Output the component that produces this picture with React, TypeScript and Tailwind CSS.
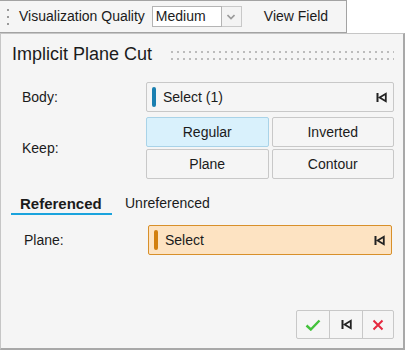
import React from "react";

const font = { fontFamily: '"Liberation Sans", Arial, sans-serif' };

function ClearIcon({ color = "#222" }: { color?: string }) {
  return (
    <svg width="11" height="11" viewBox="0 0 11 11">
      <rect x="0.5" y="1" width="2" height="9" fill={color} />
      <polygon points="3.6,5.5 9.8,1.8 9.8,9.2" fill="none" stroke={color} strokeWidth="1.8" strokeLinejoin="miter" />
    </svg>
  );
}

function Dots() {
  return (
    <svg className="w-full h-[10px] block" height="10">
      <defs>
        <pattern id="dp" x="0" y="0" width="6" height="7" patternUnits="userSpaceOnUse">
          <rect x="0" y="0" width="2" height="2" fill="#bcbcbc" />
        </pattern>
      </defs>
      <rect x="0" y="0" width="100%" height="9" fill="url(#dp)" />
    </svg>
  );
}

export default function App() {
  return (
    <div className="w-[407px] h-[351px] bg-white text-[14px] text-[#1b1b1b] relative overflow-hidden" style={font}>
      {/* toolbar */}
      <div className="w-[347px] h-[33px] border border-l-0 border-[#a3a3a3] bg-[#f5f5f5] flex items-center">
        <div className="flex flex-col gap-[5px] ml-[7px] w-[2px]">
          <div className="w-[2px] h-[2px] bg-[#9a9a9a]" />
          <div className="w-[2px] h-[2px] bg-[#9a9a9a]" />
          <div className="w-[2px] h-[2px] bg-[#9a9a9a]" />
        </div>
        <span className="ml-[10px] whitespace-nowrap">Visualization Quality</span>
        <div className="ml-[7px] flex h-[21px]">
          <div className="w-[70px] h-full bg-white border border-[#b4b4b4] flex items-center pl-[3px]">Medium</div>
          <div className="w-[20px] h-full bg-[#f3f3f3] border border-l-0 border-[#c8c8c8] flex items-center justify-center">
            <svg width="8" height="6" viewBox="0 0 8 6">
              <path d="M0.5 1 L4 4.5 L7.5 1" fill="none" stroke="#9a9a9a" strokeWidth="1.6" />
            </svg>
          </div>
        </div>
        <span className="ml-[22px] whitespace-nowrap">View Field</span>
      </div>

      {/* panel */}
      <div className="w-[405px] h-[317px] border border-[#c6c6c6] border-r-2 border-r-[#a8a8a8] border-b-2 border-b-[#a8a8a8] bg-[#f5f5f5] flex flex-col">
        <div className="h-[40px] flex items-center pl-[11px] pr-[9px]">
          <span className="text-[18px] leading-none whitespace-nowrap shrink-0">Implicit Plane Cut</span>
          <div className="flex-1 min-w-0 ml-[19px] pt-[4px]">
            <Dots />
          </div>
        </div>

        {/* Body row */}
        <div className="mt-[8px] flex items-center pl-[21px] pr-[9px]">
          <span className="w-[124px]">Body:</span>
          <div className="flex-1 h-[30px] bg-[#f5f5f5] border border-[#c8c8c8] rounded-[2px] flex items-center pl-[5px] pr-[6px]">
            <div className="w-[4px] h-[20px] rounded-[2px] bg-[#1a7fb0]" />
            <span className="ml-[7px] flex-1">Select (1)</span>
            <ClearIcon />
          </div>
        </div>

        {/* Keep */}
        <div className="mt-[5px] flex items-center pl-[21px] pr-[9px]">
          <span className="w-[124px]">Keep:</span>
          <div className="flex-1 grid grid-cols-2 gap-x-[3px] gap-y-[2px]">
            <div className="h-[30px] flex items-center justify-center bg-[#d9f1fc] border border-[#a9d3e8] rounded-[2px]">Regular</div>
            <div className="h-[30px] flex items-center justify-center border border-[#c8c8c8] rounded-[2px]">Inverted</div>
            <div className="h-[30px] flex items-center justify-center border border-[#c8c8c8] rounded-[2px]">Plane</div>
            <div className="h-[30px] flex items-center justify-center border border-[#c8c8c8] rounded-[2px]">Contour</div>
          </div>
        </div>

        {/* Tabs */}
        <div className="mt-[14px] flex pl-[10px]">
          <div className="h-[22px] px-[9px] flex items-start text-[15px] font-bold border-b-2 border-[#1aa3dd] w-[101px] whitespace-nowrap">Referenced</div>
          <div className="h-[22px] ml-[4px] px-[9px] flex items-start whitespace-nowrap">Unreferenced</div>
        </div>

        {/* Plane row */}
        <div className="mt-[10px] flex items-center pl-[23px] pr-[11px]">
          <span className="w-[124px]">Plane:</span>
          <div className="flex-1 h-[30px] bg-[#fde3c2] border border-[#d8902a] rounded-[2px] flex items-center pl-[5px] pr-[6px]">
            <div className="w-[4px] h-[20px] rounded-[2px] bg-[#d27f0d]" />
            <span className="ml-[7px] flex-1">Select</span>
            <ClearIcon />
          </div>
        </div>

        <div className="flex-1" />

        {/* footer */}
        <div className="flex justify-end pr-[9px] pb-[9px]">
          <div className="flex h-[29px] border border-[#c8c8c8] rounded-[2px] bg-[#f5f5f5]">
            <div className="w-[32px] flex items-center justify-center">
              <svg width="16" height="12" viewBox="0 0 16 12">
                <path d="M1.5 6.5 L5.8 10.5 L14.5 1.5" fill="none" stroke="#43c23b" strokeWidth="2.4" />
              </svg>
            </div>
            <div className="w-[33px] flex items-center justify-center border-l border-[#c8c8c8]">
              <ClearIcon />
            </div>
            <div className="w-[31px] flex items-center justify-center border-l border-[#c8c8c8]">
              <svg width="12" height="12" viewBox="0 0 12 12">
                <path d="M1.5 1.5 L10.5 10.5 M10.5 1.5 L1.5 10.5" fill="none" stroke="#e5283f" strokeWidth="2" />
              </svg>
            </div>
          </div>
        </div>
      </div>
    </div>
  );
}
